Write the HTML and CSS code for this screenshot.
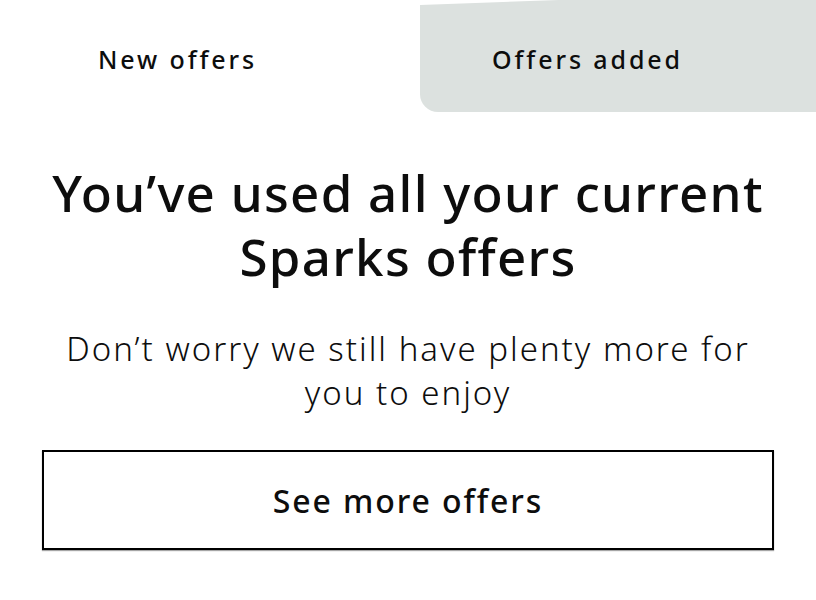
FILE: index.html
```html
<!DOCTYPE html>
<html lang="en">
<head>
<meta charset="utf-8">
<title>Sparks offers</title>
<link rel="stylesheet" href="styles.css">
</head>
<body>
  <nav class="tabs">
    <div class="tab tab-new">New offers</div>
    <div class="tab tab-added">Offers added</div>
  </nav>
  <main class="empty">
    <h1 class="empty-title">You’ve used all your current Sparks offers</h1>
    <p class="empty-text">Don’t worry we still have plenty more for you to enjoy</p>
    <button class="btn-more" type="button">See more offers</button>
  </main>
</body>
</html>
```

FILE: styles.css
```css
html, body {
  margin: 0;
  padding: 0;
  background: #ffffff;
}

body {
  width: 816px;
  height: 600px;
  overflow: hidden;
  font-family: "Noto Sans", "Open Sans", sans-serif;
  color: #0d0d0d;
}

.tabs {
  display: flex;
  height: 112px;
}

.tab {
  display: flex;
  align-items: center;
  padding-top: 6px;
  box-sizing: border-box;
  font-size: 25px;
  font-weight: 500;
  letter-spacing: 2.9px;
}

.tab-new {
  width: 420px;
  padding-left: 98px;
}

.tab-added {
  flex: 1;
  padding-left: 72px;
  background: #dce1df;
  border-bottom-left-radius: 18px;
  clip-path: polygon(0 5px, 35% 0, 100% 0, 100% 100%, 0 100%);
}

.empty {
  display: flex;
  flex-direction: column;
  align-items: center;
  text-align: center;
}

.empty-title {
  margin: 48px 40px 0;
  font-size: 51px;
  line-height: 64px;
  font-weight: 500;
  letter-spacing: 1.3px;
}

.empty-text {
  margin: 39px 40px 0;
  font-size: 33px;
  line-height: 44px;
  font-weight: 300;
  letter-spacing: 2px;
}

.btn-more {
  margin-top: 35px;
  width: 732px;
  height: 100px;
  background: #ffffff;
  border: 2px solid #000;
  box-shadow: 0 1px 1px rgba(0, 0, 0, 0.35);
  font-family: inherit;
  font-size: 32px;
  font-weight: 500;
  letter-spacing: 1.9px;
  color: #0d0d0d;
  cursor: pointer;
}
```
